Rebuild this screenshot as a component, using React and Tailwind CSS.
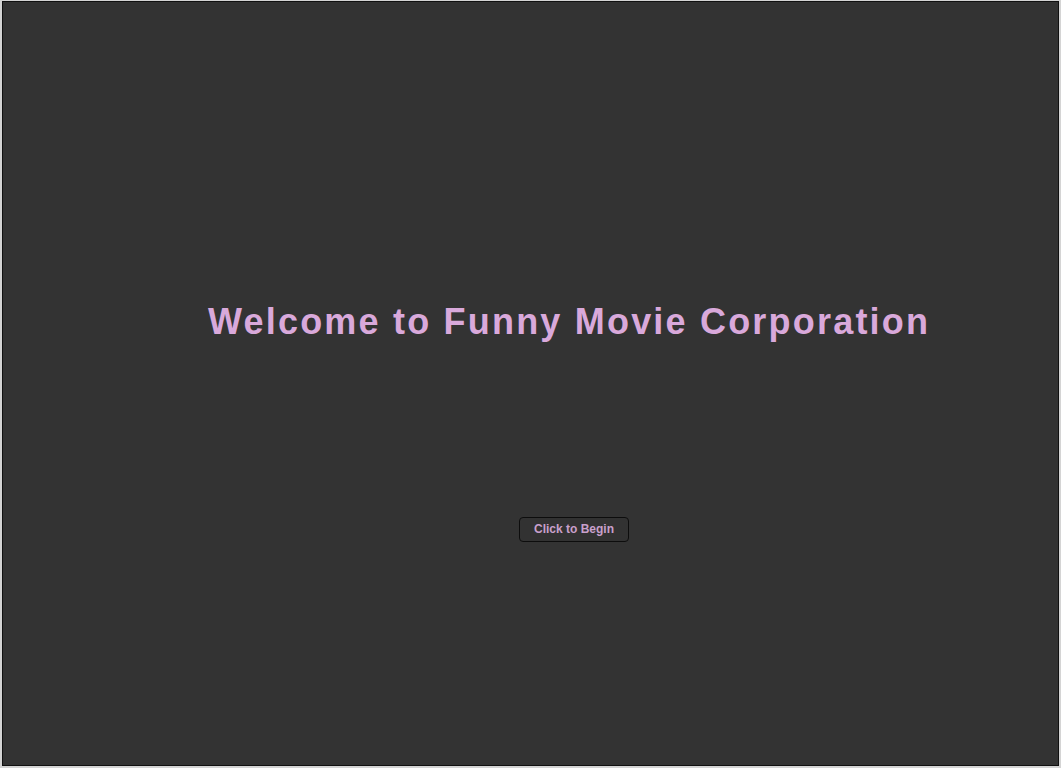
export default function App() {
  return (
    <div className="h-[768px] w-[1061px] bg-[#d4d4d4] pl-[2px] pt-px pr-[2px] pb-[2px]">
      <div className="h-[765px] w-[1057px] border border-[#111] bg-[#333333] font-['Liberation_Sans',Arial,sans-serif]">
        <div className="flex flex-col items-start pl-[205px] pt-[300px]">
          <h1 className="text-[36px] font-bold leading-[40px] tracking-[2.2px] text-[#d9a9db]">
            Welcome to Funny Movie Corporation
          </h1>
        </div>
        <div className="pl-[516px] pt-[174px]">
          <button className="h-[25px] w-[110px] rounded-[4px] border border-[#0d0d0d] bg-[#323232] text-[12px] font-bold text-[#c9a0cc]">
            Click to Begin
          </button>
        </div>
      </div>
    </div>
  );
}
